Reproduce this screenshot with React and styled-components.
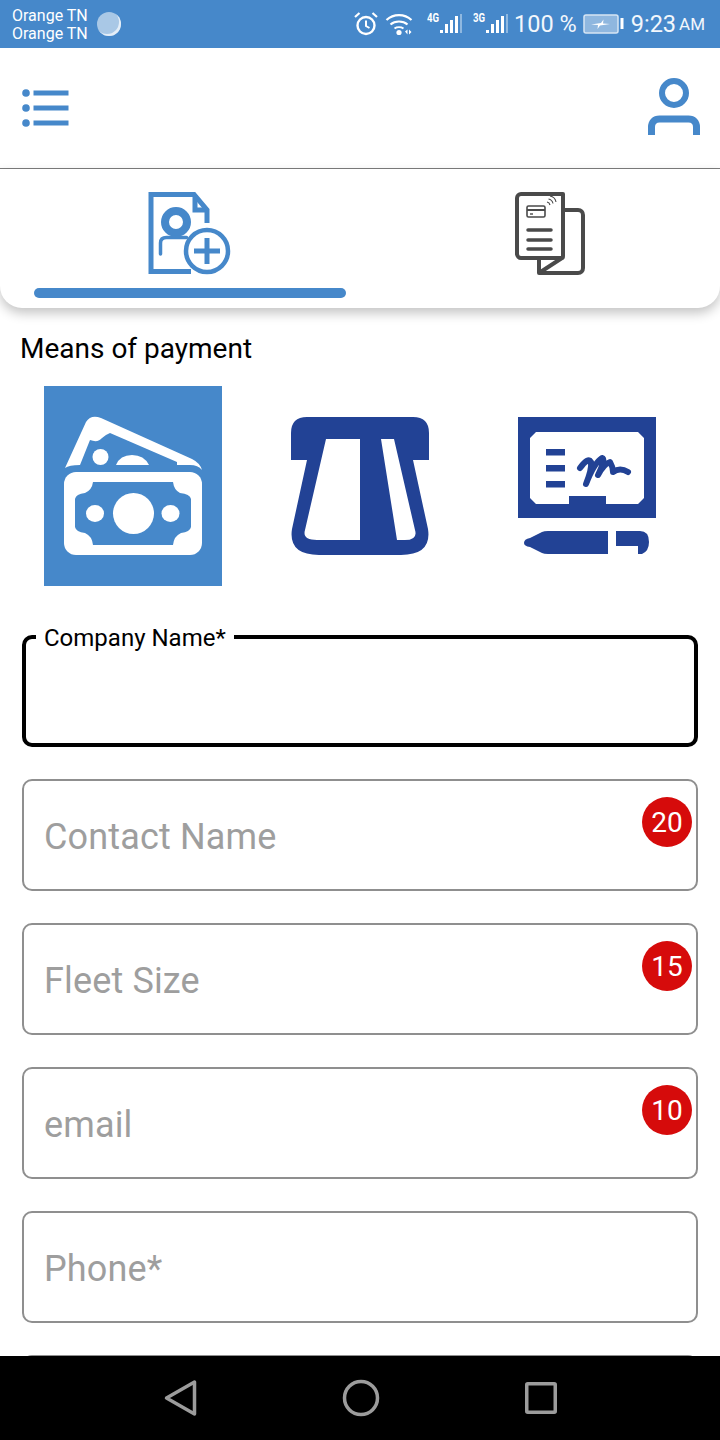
import styled, { createGlobalStyle } from "styled-components";

const colors = {
  primary: "#4688ca",
  navy: "#224295",
  dark: "#4a4a4a",
  border: "#8f8f8f",
  placeholder: "#9e9e9e",
  badge: "#d60b0b",
  navIcon: "#9c9c9c",
};

const GlobalStyle = createGlobalStyle`
  html, body {
    margin: 0;
    padding: 0;
    background: #fff;
    font-family: Roboto, "Liberation Sans", sans-serif;
  }
`;

const Page = styled.div`
  width: 720px;
  height: 1440px;
  display: flex;
  flex-direction: column;
  overflow: hidden;
  background: #fff;
`;

const StatusBar = styled.div`
  flex: 0 0 48px;
  display: flex;
  align-items: center;
  justify-content: space-between;
  padding: 0 15px 0 12px;
  background: ${colors.primary};
  color: #fff;
`;

const StatusGroup = styled.div`
  display: flex;
  align-items: center;
`;

const Carrier = styled.div`
  font-size: 16px;
  line-height: 18px;
  width: 85px;
  padding-top: 1px;
`;

const Spinner = styled.div`
  width: 24px;
  height: 24px;
  border-radius: 50%;
  background: #a9c8e6;
  box-shadow: inset -2px -2px 0 #e4eef8;
`;

const NetworkTag = styled.span`
  font-size: 12px;
  font-weight: 700;
  line-height: 12px;
  width: 13px;
  margin-top: -12px;
  margin-left: ${({ $gap }) => $gap}px;
  transform: scaleX(0.8);
  transform-origin: left center;
`;

const StatusText = styled.span`
  font-size: ${({ $size }) => $size}px;
  line-height: 28px;
  margin-left: ${({ $gap }) => $gap}px;
  color: #f2f7fc;
`;

const StatusIcon = styled.svg`
  display: block;
  flex: none;
  margin-left: ${({ $gap }) => $gap || 0}px;
`;

const Header = styled.header`
  flex: 0 0 121px;
  box-sizing: border-box;
  display: flex;
  align-items: flex-start;
  justify-content: space-between;
  padding: 29px 20px 0 22px;
  border-bottom: 1px solid #7d7d7d;
`;

const Tabs = styled.nav`
  flex: 0 0 139px;
  box-sizing: border-box;
  display: grid;
  grid-template-columns: 312px 312px;
  column-gap: 48px;
  padding: 23px 0 0 34px;
  border-radius: 0 0 22px 22px;
  background: #fff;
  box-shadow: 0 5px 12px rgba(0, 0, 0, 0.24);
  position: relative;
`;

const Tab = styled.div`
  display: flex;
  flex-direction: column;
  align-items: center;
`;

const TabIconSlot = styled.div`
  height: 96px;
`;

const TabIndicator = styled.div`
  align-self: stretch;
  height: 10px;
  border-radius: 5px;
  background: ${({ $active }) => ($active ? colors.primary : "transparent")};
`;

const Content = styled.main`
  flex: 1;
  min-height: 0;
  overflow: hidden;
`;

const SectionTitle = styled.h2`
  margin: 25px 0 21px 20px;
  font-size: 28px;
  font-weight: 400;
  line-height: 32px;
  color: #000;
`;

const PaymentRow = styled.div`
  display: grid;
  grid-template-columns: repeat(3, 1fr);
  height: 200px;
  padding: 0 20px;
  margin-bottom: 49px;
`;

const PaymentOption = styled.div`
  justify-self: center;
  width: 178px;
  height: 200px;
  display: flex;
  align-items: center;
  justify-content: center;
  background: ${({ $selected }) => ($selected ? colors.primary : "transparent")};
`;

const Form = styled.form`
  display: flex;
  flex-direction: column;
  gap: 32px;
  padding: 0 22px;
`;

const Field = styled.div`
  position: relative;
  flex: none;
  box-sizing: border-box;
  height: 112px;
  display: flex;
  align-items: center;
  padding: 4px 0 0 20px;
  border: ${({ $focused }) => ($focused ? "4px solid #000" : `2px solid ${colors.border}`)};
  border-radius: 10px;
`;

const FloatingLabel = styled.label`
  position: absolute;
  top: -15px;
  left: 10px;
  padding: 0 8px;
  background: #fff;
  font-size: 24px;
  line-height: 28px;
  color: #000;
`;

const Placeholder = styled.span`
  font-size: 36px;
  line-height: 42px;
  letter-spacing: 0.15px;
  color: ${colors.placeholder};
`;

const Badge = styled.span`
  position: absolute;
  top: 16px;
  right: 4px;
  box-sizing: border-box;
  width: 50px;
  height: 50px;
  padding-top: 1px;
  border-radius: 50%;
  display: flex;
  align-items: center;
  justify-content: center;
  background: ${colors.badge};
  color: #fff;
  font-size: 28px;
`;

const NavBar = styled.div`
  flex: 0 0 84px;
  display: flex;
  align-items: center;
  justify-content: center;
  gap: 144.5px;
  background: #000;
  position: relative;
`;

const Signal = ({ gap }) => (
  <StatusIcon $gap={gap} width="23" height="22" viewBox="0 0 23 22">
    <rect x="0" y="17" width="3" height="3" fill="#fff" />
    <rect x="5" y="11" width="3" height="9" fill="#fff" />
    <rect x="10" y="7" width="3" height="13" fill="#fff" />
    <rect x="15" y="3" width="3" height="17" fill="#fff" />
    <rect x="20" y="1" width="2" height="19" fill="#8fb8e0" />
  </StatusIcon>
);

const AlarmIcon = () => (
  <StatusIcon width="26" height="26" viewBox="0 0 26 26" fill="none" stroke="#fff">
    <circle cx="13" cy="14.5" r="8.5" strokeWidth="2.4" />
    <path d="M13 9.5v5.5l3.5 2" strokeWidth="2" />
    <path d="M2 6l4.5-4M24 6l-4.5-4" strokeWidth="2.2" />
  </StatusIcon>
);

const WifiIcon = () => (
  <StatusIcon $gap={6} width="30" height="24" viewBox="0 0 30 24" fill="none" stroke="#fff">
    <path d="M1.5 8C8.500 1.500 19.500 1.500 26.500 8" strokeWidth="2.2" />
    <path d="M5.500 12.500C10 8.500 18 8.500 22.500 12.500" strokeWidth="2.2" />
    <path d="M9.500 16.500C12 14.800 16 14.800 18.500 16.500" strokeWidth="2" />
    <circle cx="14" cy="20.500" r="2.600" fill="#fff" stroke="none" />
    <path d="M20 19.500l2.500-2v5zM24 17.500v5l2.500-2.500z" fill="#fff" stroke="none" />
  </StatusIcon>
);

const BatteryIcon = () => (
  <StatusIcon $gap={6} width="41" height="20" viewBox="0 0 41 20">
    <rect x="1" y="1" width="34" height="18" rx="2" fill="#8fb7df" stroke="#d6e5f4" strokeWidth="1.500" />
    <path d="M8 10.500l10-1.500 2.500-3.500-.5 4 7 .5-10 1.500-2.500 3.500.5-4z" fill="#fff" />
    <rect x="37.500" y="4" width="3" height="11" fill="#fff" />
  </StatusIcon>
);

const MenuIcon = () => (
  <svg width="48" height="60" viewBox="0 0 48 60" fill={colors.primary}>
    <circle cx="4" cy="16" r="3.800" />
    <circle cx="4" cy="31" r="3.800" />
    <circle cx="4" cy="46" r="3.800" />
    <rect x="11.500" y="13.500" width="35" height="5" />
    <rect x="11.500" y="28.500" width="35" height="5" />
    <rect x="11.500" y="43.500" width="35" height="5" />
  </svg>
);

const PersonIcon = () => (
  <svg width="52" height="60" viewBox="0 0 52 60" fill="none" stroke={colors.primary}>
    <circle cx="26" cy="16" r="12" strokeWidth="6" />
    <path d="M3.500 58v-8c0-5 3-8 8-8h29c5 0 8 3 8 8v8" strokeWidth="7" />
  </svg>
);

const AddDocumentIcon = () => (
  <svg width="84" height="84" viewBox="0 0 84 84" fill="none" stroke={colors.primary}>
    <path d="M59 31V18L46 2.500H3v77h40" strokeWidth="5" />
    <path d="M47 3v15h13" strokeWidth="5" />
    <circle cx="28" cy="30" r="11" strokeWidth="8" />
    <path d="M12.500 62V51c0-4 2.500-5.500 6-5.500h20" strokeWidth="3.500" strokeLinecap="round" />
    <circle cx="59" cy="59" r="21" fill="#fff" strokeWidth="4.500" />
    <path d="M59 46v26M46 59h26" strokeWidth="5" />
  </svg>
);

const ReceiptsIcon = () => (
  <svg width="70" height="84" viewBox="0 0 70 84" fill="none" stroke={colors.dark} strokeLinejoin="round">
    <path d="M48 18h15c3 0 5 2 5 5v53c0 3-2 5-5 5H24" strokeWidth="4" />
    <path d="M6 2h42v62c0 1 0 2-1 2H6c-2 0-4-2-4-4V6c0-2 2-4 4-4z" strokeWidth="4" />
    <path d="M24 66v15l23-15" strokeWidth="4" />
    <rect x="12" y="14" width="18" height="11" rx="1.500" strokeWidth="1.600" />
    <path d="M12 18h18" strokeWidth="2" />
    <path d="M15 22h3" strokeWidth="1.400" />
    <path d="M32 10c1.500.3 2.600 1.400 3 3M33.500 7c2.500.5 4 2.200 4.500 4.500M35 4c3 .6 5.500 3 6 6" strokeWidth="1.100" />
    <path d="M13 38h23M13 48h23M13 57h23" strokeWidth="3.500" strokeLinecap="round" />
  </svg>
);

const CashIcon = () => (
  <svg width="178" height="200" viewBox="0 0 178 200">
    <path
      fill="#fff"
      d="M21 82L42 36Q47 28 57 32L148 73Q156 77 158 84Q154 79 146 79H36Q25 79 21 82Z"
    />
    <path
      fill={colors.primary}
      d="M36 79L46 54Q54 57 58 52Q61 49 66 47L133 76V79Z"
    />
    <circle cx="56.500" cy="71" r="8" fill="#fff" />
    <path d="M72 79Q76 69 88 69Q100 69 105 79Z" fill="#fff" />
    <rect x="20" y="86" width="138" height="83" rx="12" fill="#fff" />
    <path
      fill={colors.primary}
      d="M49 96H129Q130 104 136 107Q146 108 147 113V141Q146 146 137 147Q130 150 129 159H49Q48 150 41 147Q32 146 31 141V113Q32 108 41 107Q48 104 49 96Z"
    />
    <circle cx="89.500" cy="127.500" r="20.500" fill="#fff" />
    <ellipse cx="51" cy="127.500" rx="9" ry="8.500" fill="#fff" />
    <ellipse cx="126.500" cy="127.500" rx="9" ry="8.500" fill="#fff" />
  </svg>
);

const CardIcon = () => (
  <svg width="138" height="138" viewBox="0 0 138 138">
    <path
      fill={colors.navy}
      fillRule="evenodd"
      d="M0 43V16Q0 0 16 0H122Q138 0 138 16V43H122L137 112Q141 138 110 138H28Q-3 138 1 112L16 43Z
         M35 22H69V123H26Q11 123 14 113Z
         M90 22H103L124 113Q127 123 114 123H106Z"
    />
  </svg>
);

const ChequeIcon = () => (
  <svg width="138" height="138" viewBox="0 0 138 138" fill={colors.navy}>
    <path
      fillRule="evenodd"
      d="M0 0H138V101H0Z
         M18 15H120L126 21V81L120 87H88V79H51V87H18L12 81V21Z"
    />
    <rect x="28" y="32" width="19" height="6.500" />
    <rect x="28" y="48" width="19" height="6.500" />
    <rect x="28" y="64" width="19" height="6.500" />
    <path
      d="M62 51Q70 40 73 45Q74 52 68 67Q76 46 84 41Q88 42 80 58Q86 47 92 45Q95 50 95 55Q102 50 110 55"
      fill="none"
      stroke={colors.navy}
      strokeWidth="6"
      strokeLinecap="round"
      strokeLinejoin="round"
    />
    <path d="M6 126Q6 122 12 121L24 115Q26 114 30 114H90V137H30Q26 137 24 136L12 130Q6 129 6 126Z" />
    <path d="M98 114H122Q131 114 131 125Q131 134 124 137H120V129H98Z" />
  </svg>
);

const NavIcon = styled.svg`
  display: block;
  fill: none;
  stroke: ${colors.navIcon};
  stroke-width: 3.5;
  stroke-linejoin: round;
`;

const fields = [
  { label: "Contact Name", badge: 20 },
  { label: "Fleet Size", badge: 15 },
  { label: "email", badge: 10 },
  { label: "Phone*" },
];

function App() {
  return (
    <Page>
      <GlobalStyle />

      <StatusBar>
        <StatusGroup>
          <Carrier>
            Orange TN
            <br />
            Orange TN
          </Carrier>
          <Spinner />
        </StatusGroup>
        <StatusGroup>
          <AlarmIcon />
          <WifiIcon />
          <NetworkTag $gap={12}>4G</NetworkTag>
          <Signal gap={0} />
          <NetworkTag $gap={10}>3G</NetworkTag>
          <Signal gap={0} />
          <StatusText $size={23.5} $gap={5}>100 %</StatusText>
          <BatteryIcon />
          <StatusText $size={23.5} $gap={7}>9:23</StatusText>
          <StatusText $size={17} $gap={3}>AM</StatusText>
        </StatusGroup>
      </StatusBar>

      <Header>
        <MenuIcon />
        <PersonIcon />
      </Header>

      <Tabs>
        <Tab>
          <TabIconSlot>
            <AddDocumentIcon />
          </TabIconSlot>
          <TabIndicator $active />
        </Tab>
        <Tab>
          <TabIconSlot>
            <ReceiptsIcon />
          </TabIconSlot>
          <TabIndicator />
        </Tab>
      </Tabs>

      <Content>
        <SectionTitle>Means of payment</SectionTitle>
        <PaymentRow>
          <PaymentOption $selected>
            <CashIcon />
          </PaymentOption>
          <PaymentOption>
            <CardIcon />
          </PaymentOption>
          <PaymentOption>
            <ChequeIcon />
          </PaymentOption>
        </PaymentRow>

        <Form>
          <Field $focused>
            <FloatingLabel>Company Name*</FloatingLabel>
          </Field>
          {fields.map((field) => (
            <Field key={field.label}>
              <Placeholder>{field.label}</Placeholder>
              {field.badge && <Badge>{field.badge}</Badge>}
            </Field>
          ))}
          <Field />
        </Form>
      </Content>

      <NavBar>
        <NavIcon width="34" height="38" viewBox="0 0 34 38">
          <path d="M30.500 3V35L2.500 19Z" />
        </NavIcon>
        <NavIcon width="38" height="38" viewBox="0 0 38 38">
          <circle cx="19" cy="19" r="16.500" />
        </NavIcon>
        <NavIcon width="32" height="32" viewBox="0 0 32 32">
          <rect x="1.750" y="1.750" width="28.500" height="28.500" rx="1" />
        </NavIcon>
      </NavBar>
    </Page>
  );
}

export default App;
